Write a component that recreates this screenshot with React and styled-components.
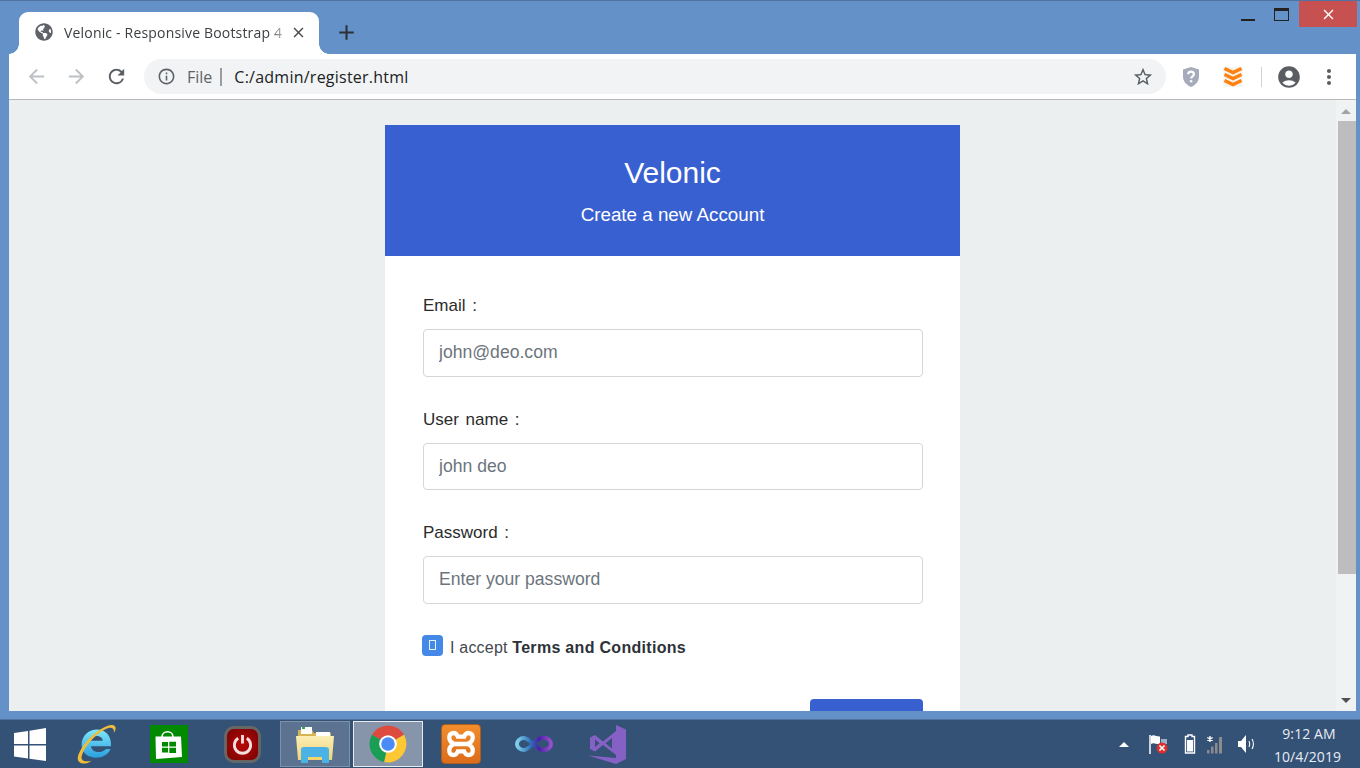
import styled, { createGlobalStyle } from "styled-components";
import { FaGlobeAmericas } from "react-icons/fa";
import { MdClose, MdAdd, MdArrowBack, MdArrowForward, MdRefresh, MdInfoOutline, MdStarBorder, MdAccountCircle, MdMoreVert } from "react-icons/md";

const GlobalStyle = createGlobalStyle`
  html, body {
    margin: 0;
    padding: 0;
    width: 1360px;
    height: 768px;
    overflow: hidden;
  }
  * {
    box-sizing: border-box;
  }
`;

function App() {
  return (
    <Desktop>
      <GlobalStyle />
      <BrowserWindow>
        <TabStrip>
          <Tab>
            <TabGlobe>
              <FaGlobeAmericas />
            </TabGlobe>
            <TabTitle>Velonic - Responsive Bootstrap 4</TabTitle>
            <TabClose>
              <MdClose />
            </TabClose>
          </Tab>
          <NewTab>
            <MdAdd />
          </NewTab>
          <WindowControls>
            <MinBtn>
              <span />
            </MinBtn>
            <MaxBtn>
              <span />
            </MaxBtn>
            <CloseBtn>
              <MdClose />
            </CloseBtn>
          </WindowControls>
        </TabStrip>

        <Toolbar>
          <NavIcon $off>
            <MdArrowBack />
          </NavIcon>
          <NavIcon $off>
            <MdArrowForward />
          </NavIcon>
          <NavIcon>
            <MdRefresh />
          </NavIcon>
          <Omnibox>
            <InfoIcon>
              <MdInfoOutline />
            </InfoIcon>
            <FileLabel>File</FileLabel>
            <OmniDivider />
            <Url>C:/admin/register.html</Url>
            <StarIcon>
              <MdStarBorder />
            </StarIcon>
          </Omnibox>
          <ExtIcons>
            <svg width="20" height="22" viewBox="0 0 20 22">
              <path d="M10 1 L18 3.5 V10.5 C18 15.5 14.5 19 10 21 C5.5 19 2 15.5 2 10.5 V3.5 Z" fill="#a6abbb" />
              <path d="M7.2 8.2 C7.2 4.8 12.9 4.8 12.9 8.2 C12.9 10.4 10.1 10.2 10.1 12.4" fill="none" stroke="#fff" strokeWidth="2.1" />
              <circle cx="10.1" cy="15.2" r="1.3" fill="#fff" />
            </svg>
            <svg width="20" height="22" viewBox="0 0 20 22">
              <rect x="0.5" y="1" width="19" height="20" fill="#f6f4ef" />
              <g fill="none" stroke="#ff7f0f" strokeWidth="3.4">
                <path d="M1.5 2.5 L10 6.5 L18.5 2.5" />
                <path d="M1.5 8.5 L10 12.5 L18.5 8.5" />
                <path d="M1.5 14.5 L10 18.5 L18.5 14.5" />
              </g>
            </svg>
            <ToolDivider />
            <AccountIcon>
              <MdAccountCircle />
            </AccountIcon>
            <MenuIcon>
              <MdMoreVert />
            </MenuIcon>
          </ExtIcons>
        </Toolbar>

        <Viewport>
          <PageArea>
            <Card>
              <CardHeader>
                <Brand>Velonic</Brand>
                <Subtitle>Create a new Account</Subtitle>
              </CardHeader>
              <CardBody>
                <Field>
                  <Label>Email :</Label>
                  <Input placeholder="john@deo.com" />
                </Field>
                <Field>
                  <Label>User name :</Label>
                  <Input placeholder="john deo" />
                </Field>
                <Field>
                  <Label>Password :</Label>
                  <Input placeholder="Enter your password" />
                </Field>
                <CheckRow>
                  <CheckBox>
                    <span />
                  </CheckBox>
                  <CheckText>
                    I accept <b>Terms and Conditions</b>
                  </CheckText>
                </CheckRow>
                <ButtonRow>
                  <SubmitButton />
                </ButtonRow>
              </CardBody>
            </Card>
          </PageArea>
          <Scrollbar>
            <ArrowUp />
            <ScrollTrack>
              <ScrollThumb />
            </ScrollTrack>
            <ArrowDown />
          </Scrollbar>
        </Viewport>
      </BrowserWindow>

      <Taskbar>
        <StartButton>
          <svg width="32" height="33" viewBox="0 0 32 33">
            <path d="M0 5 L14 3 V16 H0 Z M15.5 2.8 L32 0 V16 H15.5 Z M0 17.5 H14 V30.5 L0 28.5 Z M15.5 17.5 H32 V33 L15.5 30.7 Z" fill="#fff" />
          </svg>
        </StartButton>
        <PinnedApps>
          <AppSlot>
            <svg width="40" height="40" viewBox="3 2 34 36">
              <defs>
                <linearGradient id="ieBlue" x1="0" y1="0" x2="0" y2="1">
                  <stop offset="0" stopColor="#7fe8fb" />
                  <stop offset="1" stopColor="#2a9fe0" />
                </linearGradient>
              </defs>
              <path d="M7 21 C7 12 14 7 21 7 C29 7 34 13 33.5 22 H15.5 C16 28 25 29 29 24.5 H33 C29 36 7 35 7 21 Z M15.5 17 H26 C25.5 11.5 16 11.5 15.5 17 Z" fill="url(#ieBlue)" fillRule="evenodd" />
              <path d="M4 35 C1 30 15 8 33 3 C38 2 39 6 36 10 C37 5 33 4 28 7 C17 13 7 26 7 33 C8 36 12 36 16 35 C11 39 6 38 4 35 Z" fill="#f0bd3a" />
            </svg>
          </AppSlot>
          <AppSlot>
            <StoreTile>
              <svg width="30" height="30" viewBox="0 0 30 30">
                <path d="M8 8 C8 1 19 1 19 8" fill="none" stroke="#fff" strokeWidth="1.6" />
                <path d="M1.5 7.5 H27 L28 28 L2 30 Z" fill="#fff" />
                <path d="M8 13 H14 V17.5 H8 Z M15.3 12.7 H22 V17.5 H15.3 Z M8 18.8 H14 V23.5 H8 Z M15.3 18.8 H22 V24 H15.3 Z" fill="#018a00" />
              </svg>
            </StoreTile>
          </AppSlot>
          <AppSlot>
            <PowerTile>
              <svg width="21" height="21" viewBox="0 0 22 22">
                <path d="M6.5 4.5 A8.5 8.5 0 1 0 15.5 4.5" fill="none" stroke="#f5dede" strokeWidth="3" />
                <path d="M11 1 V10" stroke="#f5dede" strokeWidth="3" />
              </svg>
            </PowerTile>
          </AppSlot>
          <AppSlot $open>
            <svg width="40" height="38" viewBox="0 0 40 38">
              <defs>
                <linearGradient id="folderFront" x1="0" y1="0" x2="0" y2="1">
                  <stop offset="0" stopColor="#fbeeb4" />
                  <stop offset="1" stopColor="#f1d27a" />
                </linearGradient>
              </defs>
              <path d="M3 5 H17 L19 8 H36 V30 H3 Z" fill="#d8b453" />
              <path d="M6 2 H17 V9 H6 Z" fill="#fff" />
              <path d="M7 2 H10 V4 H7 Z" fill="#3aa34a" />
              <path d="M21 7 H35 V11 H21 Z" fill="#fff" />
              <path d="M1 11 H39 L37 35 H3 Z" fill="url(#folderFront)" />
              <path d="M6 25 C6 22 8 22 10 22 H30 C33 22 34 23 34 25 V38 H27 V34 H13 V38 H6 Z" fill="#4ab2e4" />
              <path d="M13 32 H27 V35 H13 Z" fill="#f4d26c" />
            </svg>
          </AppSlot>
          <AppSlot $active>
            <svg width="38" height="38" viewBox="0 0 38 38">
              <path d="M19 19 L3 9.75 A18.5 18.5 0 0 1 35 9.75 Z" fill="#dd4b3e" />
              <path d="M19 19 L35 9.75 A18.5 18.5 0 0 1 15 37 Z" fill="#fcc934" />
              <path d="M19 19 L15 37 A18.5 18.5 0 0 1 3 9.75 Z" fill="#1a9d55" />
              <circle cx="19" cy="19" r="8.8" fill="#fff" />
              <circle cx="19" cy="19" r="6.8" fill="#4b8bf5" />
            </svg>
          </AppSlot>
          <AppSlot>
            <XamppTile>
              <svg width="32" height="32" viewBox="0 0 30 30">
                <path
                  d="M15 8 H12 C10 3 4 4 4 9 C4 12 6 14 9 15 C6 16 4 18 4 21 C4 26 10 27 12 22 H18 C20 27 26 26 26 21 C26 18 24 16 21 15 C24 14 26 12 26 9 C26 4 20 3 18 8 Z M9 15 H21"
                  fill="none"
                  stroke="#fff"
                  strokeWidth="4"
                />
              </svg>
            </XamppTile>
          </AppSlot>
          <AppSlot>
            <svg width="40" height="20" viewBox="0 0 40 20">
              <defs>
                <linearGradient id="vsLoop" x1="0" y1="0" x2="1" y2="0">
                  <stop offset="0" stopColor="#7fd0ee" />
                  <stop offset="0.4" stopColor="#2f6fb8" />
                  <stop offset="0.65" stopColor="#4a1fa8" />
                  <stop offset="1" stopColor="#9a4fd0" />
                </linearGradient>
              </defs>
              <path d="M10 4 C16 4 22 16 29 16 C34 16 37 13 37 10 C37 7 34 3.5 29 3.5 C22 3.5 16 16 10 16 C6 16 3 13 3 10 C3 7 6 4 10 4 Z" fill="none" stroke="url(#vsLoop)" strokeWidth="4" />
            </svg>
          </AppSlot>
          <AppSlot>
            <svg width="39" height="39" viewBox="0 0 39 39">
              <path d="M28 0 L38 4.5 V34 L28 39 L0 30.5 L28 33 Z" fill="#8661c5" />
              <path d="M28 6 L15 16.5 L7 10 L2 12.5 V24 L7 26.5 L15 20 L28 30 Z M7 14.5 V22 L11.5 18.3 Z M17.5 18.3 L24 13 V23.5 Z" fill="#8661c5" fillRule="evenodd" />
            </svg>
          </AppSlot>
        </PinnedApps>
        <Tray>
          <TrayCaret />
          <svg width="20" height="20" viewBox="0 0 20 20">
            <path d="M1 1 V20" stroke="#fff" strokeWidth="1.5" />
            <path d="M2 2 C5 0 8 3 11 2.5 V10 C8 11 5 8 2 10 Z" fill="#fff" />
            <path d="M12 5 H18 V10 H12 Z" fill="#9fb1c8" />
            <circle cx="13" cy="14" r="5.5" fill="#d8322e" />
            <path d="M10.5 11.5 L15.5 16.5 M15.5 11.5 L10.5 16.5" stroke="#fff" strokeWidth="1.6" />
          </svg>
          <svg width="12" height="20" viewBox="0 0 12 20">
            <path d="M3.5 2.5 H4 V1 H8 V2.5 H10.5 V19 H1.5 V2.5 Z" fill="none" stroke="#fff" strokeWidth="1.4" />
            <path d="M3 6 H9 V17.5 H3 Z" fill="#fff" />
          </svg>
          <SignalIcon width="17" height="19" viewBox="0 0 17 19">
            <path d="M1 15 H3.5 V18.5 H1 Z M5 11.5 H7.5 V18.5 H5 Z M9 8 H11.5 V18.5 H9 Z M13 2 H16 V18.5 H13 Z" fill="#8a8c8e" />
            <path d="M4 1 V7 M1.3 2.5 L6.7 5.5 M6.7 2.5 L1.3 5.5" stroke="#fff" strokeWidth="1.4" />
          </SignalIcon>
          <svg width="20" height="20" viewBox="0 0 20 20">
            <path d="M1 7 H4 L9 1 V19 L4 13 H1 Z" fill="#fff" />
            <path d="M12 7 C13 9 13 11 12 13 M15 5 C17 8.5 17 11.5 15 15" fill="none" stroke="#fff" strokeWidth="1.1" />
          </svg>
        </Tray>
        <Clock>
          <span>9:12 AM</span>
          <span>10/4/2019</span>
        </Clock>
      </Taskbar>
    </Desktop>
  );
}

const Desktop = styled.div`
  width: 1360px;
  height: 768px;
  display: flex;
  flex-direction: column;
  overflow: hidden;
  font-family: "Open Sans", sans-serif;
`;

const BrowserWindow = styled.div`
  height: 720px;
  display: flex;
  flex-direction: column;
  background: #6491c7;
  padding: 0 4px 8px 9px;
  border-top: 1px solid #4f74a3;
  border-bottom: 1px solid #4f74a3;
`;

const TabStrip = styled.div`
  height: 53px;
  display: flex;
  align-items: flex-end;
`;

const Tab = styled.div`
  position: relative;
  width: 300px;
  height: 42px;
  margin-left: 10px;
  padding: 0 12px 2px 16px;
  display: flex;
  align-items: center;
  background: #fff;
  border-radius: 9px 9px 0 0;
  &::before,
  &::after {
    content: "";
    position: absolute;
    bottom: 0;
    width: 10px;
    height: 10px;
  }
  &::before {
    left: -10px;
    background: radial-gradient(circle at 0 0, transparent 9.5px, #fff 10px);
  }
  &::after {
    right: -10px;
    background: radial-gradient(circle at 100% 0, transparent 9.5px, #fff 10px);
  }
`;

const TabGlobe = styled.div`
  font-size: 18px;
  color: #5f6368;
  display: flex;
  margin-right: 11px;
`;

const TabTitle = styled.div`
  flex: 1;
  font-size: 14px;
  letter-spacing: 0.18px;
  color: #3c4043;
  white-space: nowrap;
  overflow: hidden;
  mask-image: linear-gradient(to right, #000 92%, rgba(0, 0, 0, 0.2) 100%);
`;

const TabClose = styled.div`
  font-size: 17px;
  color: #45494d;
  display: flex;
  margin-left: 3px;
`;

const NewTab = styled.div`
  font-size: 25px;
  color: #2c3138;
  display: flex;
  margin: 0 0 9px 15px;
`;

const WindowControls = styled.div`
  margin-left: auto;
  align-self: flex-start;
  display: flex;
  margin-right: -1px;
`;

const MinBtn = styled.div`
  width: 33px;
  height: 26px;
  padding-top: 18px;
  span {
    display: block;
    width: 14px;
    height: 2px;
    background: #222;
  }
`;

const MaxBtn = styled.div`
  width: 24px;
  height: 26px;
  padding-top: 7px;
  span {
    display: block;
    width: 15px;
    height: 13px;
    border: 1px solid #222;
    border-top-width: 3px;
  }
`;

const CloseBtn = styled.div`
  width: 58px;
  height: 26px;
  margin-left: 1px;
  background: #c75050;
  color: #fff;
  font-size: 17px;
  display: flex;
  align-items: center;
  justify-content: center;
`;

const Toolbar = styled.div`
  height: 46px;
  flex-shrink: 0;
  background: #fff;
  border-bottom: 1px solid #b8b8b8;
  display: flex;
  align-items: center;
  padding: 0 0 0 16px;
`;

const NavIcon = styled.div`
  width: 40px;
  font-size: 23px;
  color: ${(p) => (p.$off ? "#bdc0c4" : "#5a5e63")};
  display: flex;
`;

const Omnibox = styled.div`
  width: 1022px;
  flex-shrink: 0;
  height: 35px;
  margin-left: -1px;
  border-radius: 18px;
  background: #f1f3f4;
  display: flex;
  align-items: center;
  padding: 0 12px 0 13px;
`;

const InfoIcon = styled.div`
  font-size: 19px;
  color: #5f6368;
  display: flex;
`;

const FileLabel = styled.span`
  font-size: 16px;
  color: #5f6368;
  margin-left: 11px;
`;

const OmniDivider = styled.div`
  width: 2px;
  height: 18px;
  background: #9a9da0;
  margin: 0 12px 0 8px;
`;

const Url = styled.span`
  flex: 1;
  font-size: 16px;
  letter-spacing: 0.24px;
  color: #202124;
`;

const StarIcon = styled.div`
  font-size: 22px;
  color: #5a5e63;
  display: flex;
`;

const ExtIcons = styled.div`
  display: flex;
  align-items: center;
  margin-left: 15px;
  gap: 22px;
`;

const ToolDivider = styled.div`
  width: 1px;
  height: 20px;
  background: #d0d2d4;
  margin: 0 -4px 0 -4px;
`;

const AccountIcon = styled.div`
  font-size: 26px;
  color: #5a5e63;
  display: flex;
  margin-left: -4px;
`;

const MenuIcon = styled.div`
  font-size: 24px;
  color: #5a5e63;
  display: flex;
  margin-left: -7px;
`;

const Viewport = styled.div`
  flex: 1;
  min-height: 0;
  display: flex;
  background: #eceff0;
`;

const PageArea = styled.div`
  flex: 1;
  overflow: hidden;
  padding: 25px 0 0 376px;
`;

const Card = styled.div`
  width: 575px;
  background: #fff;
  font-family: "Liberation Sans", sans-serif;
`;

const CardHeader = styled.div`
  height: 131px;
  background: #3960d1;
  color: #fff;
  text-align: center;
  padding-top: 30px;
`;

const Brand = styled.div`
  font-size: 30px;
  line-height: 36px;
`;

const Subtitle = styled.div`
  font-size: 18.8px;
  line-height: 22px;
  margin-top: 13px;
`;

const CardBody = styled.div`
  padding: 38px 37px 0 38px;
`;

const Field = styled.div`
  margin-bottom: 31px;
`;

const Label = styled.div`
  font-size: 17px;
  line-height: 24px;
  word-spacing: 2px;
  color: #2b2b2b;
  margin-bottom: 11px;
`;

const Input = styled.input`
  display: block;
  width: 100%;
  height: 47.5px;
  padding: 0 15px;
  background: #fff;
  border: 1px solid #d4d6d9;
  border-radius: 4px;
  font-family: "Liberation Sans", sans-serif;
  font-size: 17.6px;
  &::placeholder {
    color: #6c757d;
    opacity: 1;
  }
`;

const CheckRow = styled.div`
  display: flex;
  align-items: flex-start;
  margin: 1px 0 0 -1px;
`;

const CheckBox = styled.div`
  width: 21px;
  height: 21px;
  border-radius: 4px;
  background: #4489e8;
  display: flex;
  align-items: center;
  justify-content: center;
  span {
    display: block;
    width: 7px;
    height: 10px;
    border: 1px solid #e6f4ff;
  }
`;

const CheckText = styled.div`
  font-size: 16px;
  line-height: 18px;
  padding-top: 4.5px;
  letter-spacing: 0.2px;
  color: #44484e;
  margin-left: 7px;
  b {
    color: #2d3238;
    font-weight: 700;
    letter-spacing: 0.3px;
  }
`;

const ButtonRow = styled.div`
  display: flex;
  justify-content: flex-end;
  margin-top: 42px;
`;

const SubmitButton = styled.div`
  width: 113px;
  height: 46px;
  border-radius: 4px;
  background: #3960d1;
`;

const Scrollbar = styled.div`
  width: 20px;
  flex-shrink: 0;
  background: #f1f2f2;
  display: flex;
  flex-direction: column;
  align-items: center;
`;

const ArrowUp = styled.div`
  flex-shrink: 0;
  margin-top: 9px;
  width: 0;
  border: 5px solid transparent;
  border-top: 0;
  border-bottom: 5px solid #a3a3a3;
`;

const ScrollTrack = styled.div`
  flex: 1;
  width: 100%;
  margin-top: 7px;
`;

const ScrollThumb = styled.div`
  width: 18px;
  height: 453px;
  margin-left: 2px;
  background: #bdbdbd;
`;

const ArrowDown = styled.div`
  flex-shrink: 0;
  width: 0;
  margin-bottom: 8px;
  border: 5px solid transparent;
  border-bottom: 0;
  border-top: 5px solid #505050;
`;

const Taskbar = styled.div`
  height: 48px;
  background: #345176;
  display: flex;
  align-items: center;
`;

const StartButton = styled.div`
  width: 61px;
  padding: 0 0 0 14px;
  display: flex;
`;

const PinnedApps = styled.div`
  display: flex;
  align-items: center;
  gap: 3px;
`;

const AppSlot = styled.div`
  width: 70px;
  height: 46px;
  display: flex;
  align-items: center;
  justify-content: center;
  background: ${(p) => (p.$active ? "#8695a9" : p.$open ? "#5b7391" : "transparent")};
  border: 1px solid ${(p) => (p.$active ? "#e8ecf0" : p.$open ? "#7e91a8" : "transparent")};
`;

const StoreTile = styled.div`
  width: 38px;
  height: 38px;
  background: #018a00;
  display: flex;
  align-items: center;
  justify-content: center;
`;

const PowerTile = styled.div`
  width: 37px;
  height: 37px;
  border-radius: 10px;
  background: radial-gradient(circle, #b80a0a 0%, #780202 100%);
  border: 3px solid #666;
  display: flex;
  align-items: center;
  justify-content: center;
`;

const XamppTile = styled.div`
  width: 40px;
  height: 40px;
  border-radius: 4px;
  background: linear-gradient(#f28d2c, #dc6c1a);
  border: 1px solid #a9601f;
  display: flex;
  align-items: center;
  justify-content: center;
`;

const Tray = styled.div`
  margin-left: auto;
  display: flex;
  align-items: center;
  gap: 15px;
`;

const TrayCaret = styled.div`
  width: 0;
  margin-right: 5px;
  border: 5px solid transparent;
  border-top: 0;
  border-bottom: 5px solid #fff;
`;

const SignalIcon = styled.svg`
  margin: 0 -1px 0 -5px;
`;

const Clock = styled.div`
  width: 95px;
  margin: 0 5px 0 3px;
  padding-top: 2px;
  display: flex;
  flex-direction: column;
  align-items: center;
  gap: 4px;
  font-size: 14px;
  line-height: 19px;
  letter-spacing: 0.1px;
  color: #e8edf3;
  span:first-child {
    margin-left: 3px;
  }
`;

export default App;
